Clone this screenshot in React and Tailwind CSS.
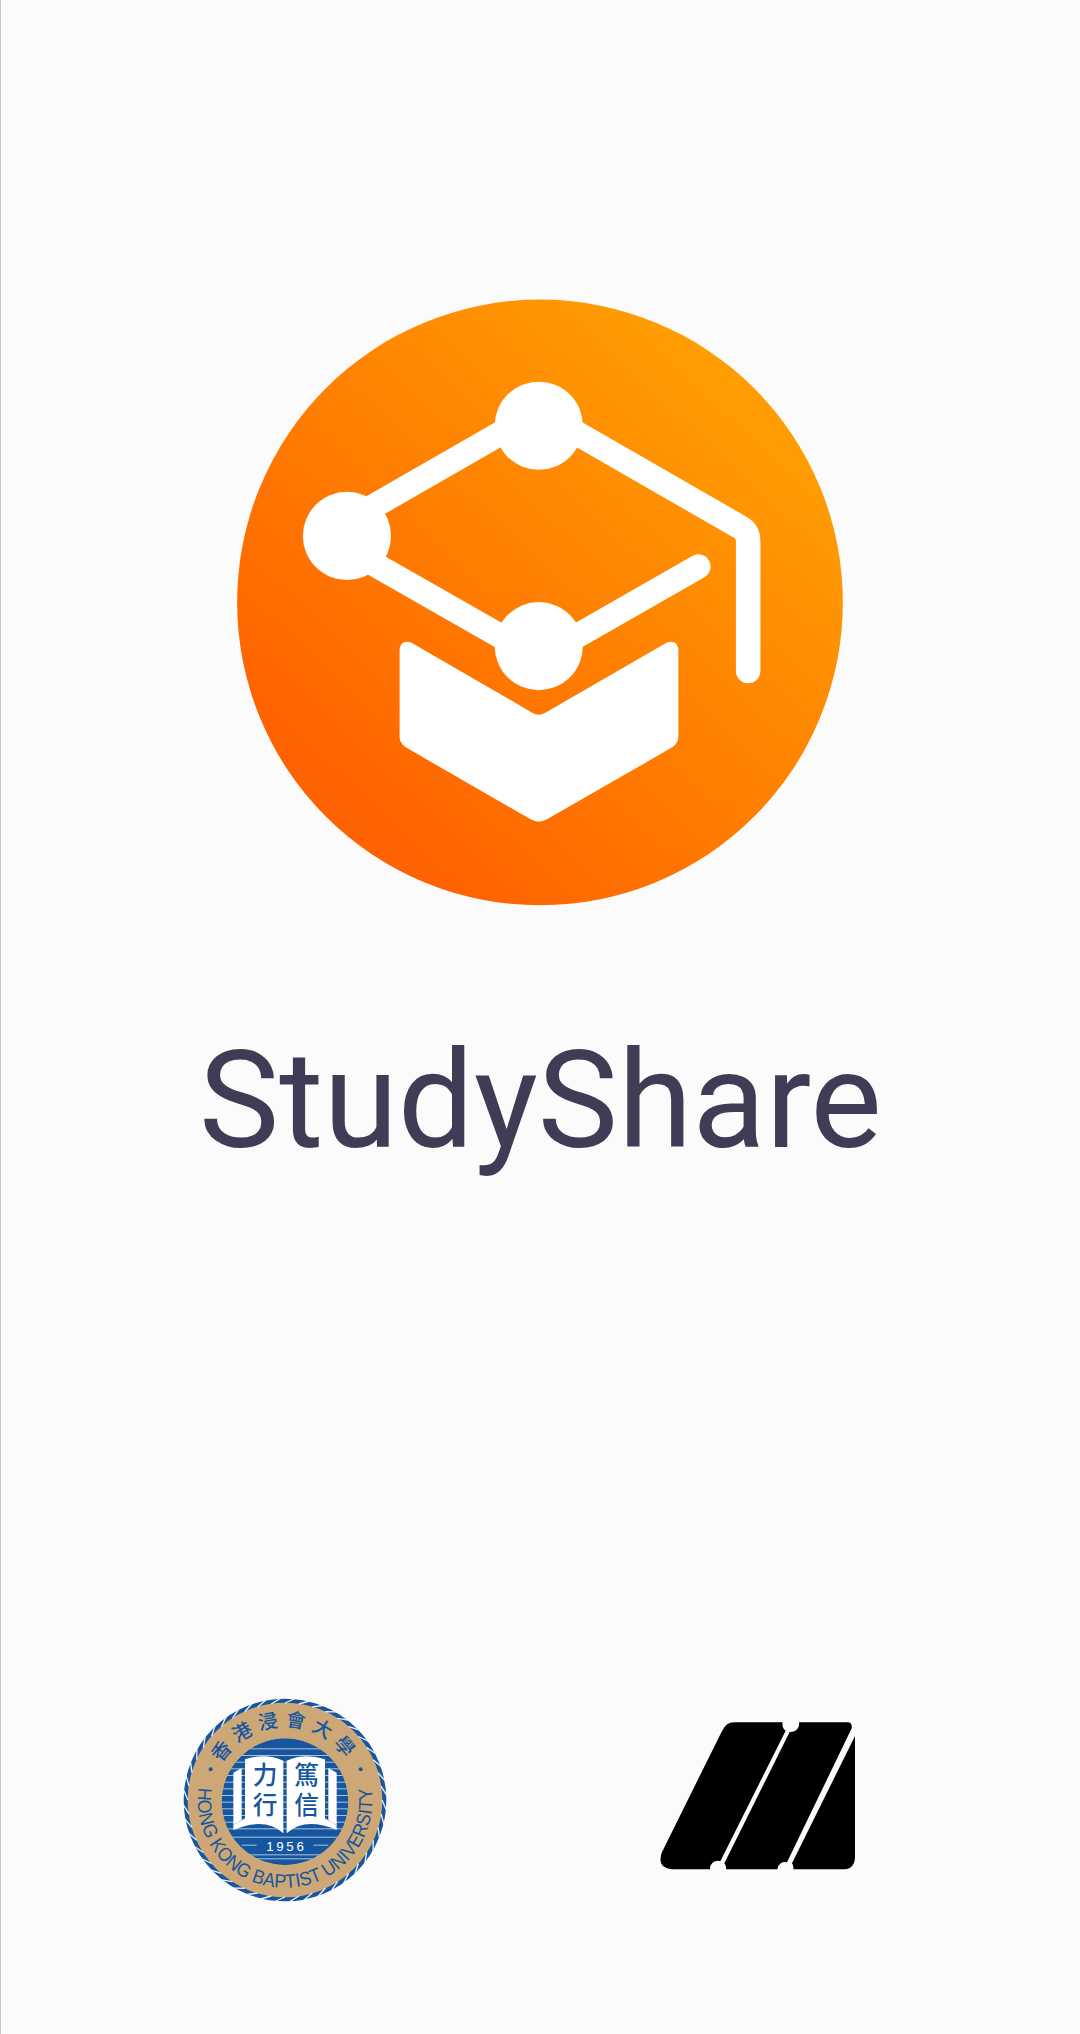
import React from 'react';

// App icon, drawn in a 1568 box that maps onto 640px
const StudyShareLogo = () => (
    <svg viewBox="0 0 1568 1568" className="w-[640px] h-[640px] shrink-0">
        <defs>
            <linearGradient id="orange" x1="0.2" y1="0.85" x2="0.85" y2="0.15">
                <stop offset="0" stopColor="#ff6200" />
                <stop offset="1" stopColor="#ff9e02" />
            </linearGradient>
        </defs>
        <circle cx="784" cy="790" r="742" fill="url(#orange)" />
        <path
            d="M1172 702 L781 926 L253 625 L781 322 L1275 606 Q1294 617 1294 640 L1294 958"
            fill="none"
            stroke="#fff"
            strokeWidth="60"
            strokeLinecap="round"
            strokeLinejoin="round"
        />
        <circle cx="781" cy="357" r="108" fill="#fff" />
        <circle cx="311" cy="627" r="108" fill="#fff" />
        <circle cx="781" cy="897" r="108" fill="#fff" />
        <path
            d="M440 905 Q443 880 468 888 L765 1060 Q781 1070 797 1060 L1095 888 Q1120 880 1123 905 L1123 1118 Q1123 1135 1108 1145 L800 1322 Q781 1332 762 1322 L455 1145 Q440 1135 440 1118 Z"
            fill="#fff"
        />
    </svg>
);

const blue = '#15569f';
const stripes = [205, 225, 245, 265, 285, 305, 325, 345, 365, 385, 405, 425, 445, 470, 523, 535];

// twisted cord round the seal: light slanted cuts across a blue ring
const cordCuts = Array.from({ length: 44 }, (_, i) => {
    const a = (i / 44) * Math.PI * 2;
    const b = a + 0.1;
    return {
        x1: 345 + 291 * Math.cos(a),
        y1: 360 + 291 * Math.sin(a),
        x2: 345 + 306 * Math.cos(b),
        y2: 360 + 306 * Math.sin(b),
    };
});

// University seal
const Seal = () => (
    <svg viewBox="0 0 690 690" className="w-[230px] h-[230px] shrink-0">
        <defs>
            <clipPath id="medallion">
                <circle cx="345" cy="365" r="190" />
            </clipPath>
            <path id="lowerArc" d="M96 280 A262 262 0 1 0 594 280" />
            <path id="upperArc" d="M125 360 A220 220 0 0 1 565 360" />
        </defs>
        <circle cx="345" cy="360" r="296" fill="#cda876" />
        <circle cx="345" cy="360" r="298" fill="none" stroke={blue} strokeWidth="12" />
        {cordCuts.map((t, i) => (
            <line key={i} x1={t.x1} y1={t.y1} x2={t.x2} y2={t.y2} stroke="#eef1f4" strokeWidth="4" />
        ))}
        <text fontFamily="'Noto Sans CJK TC', sans-serif" fontSize="58" fill={blue} fontWeight="500" textAnchor="middle">
            <textPath href="#upperArc" startOffset="50%" letterSpacing="19">香港浸會大學</textPath>
        </text>
        <text fontFamily="'Liberation Sans', sans-serif" fontSize="58" fill={blue} textAnchor="middle">
            <textPath href="#lowerArc" startOffset="50%" textLength="900" lengthAdjust="spacingAndGlyphs">HONG KONG BAPTIST UNIVERSITY</textPath>
        </text>
        <circle cx="122" cy="268" r="6" fill={blue} />
        <circle cx="572" cy="268" r="6" fill={blue} />
        <g clipPath="url(#medallion)">
            <circle cx="345" cy="365" r="190" fill={blue} />
            {stripes.map((y) => (
                <rect key={y} x="150" y={y} width="390" height="3" fill="#a9c3de" />
            ))}
        </g>
        <path d="M190 278 L215 264 L215 420 L190 436 Z" fill="#fff" />
        <path d="M500 278 L475 264 L475 420 L500 436 Z" fill="#fff" />
        <path d="M190 436 L225 415 L225 238 Q285 218 340 242 L340 460 Q285 410 190 450 Z" fill="#fff" />
        <path d="M500 436 L465 415 L465 238 Q405 218 350 242 L350 460 Q405 410 500 450 Z" fill="#fff" />
        <g fontFamily="'Noto Sans CJK TC', sans-serif" fontSize="74" fontWeight="500" fill={blue} textAnchor="middle">
            <text x="285" y="311">力</text>
            <text x="285" y="401">行</text>
            <text x="410" y="311">篤</text>
            <text x="410" y="401">信</text>
        </g>
        <rect x="215" y="494" width="45" height="3" fill="#a9c3de" />
        <rect x="430" y="494" width="45" height="3" fill="#a9c3de" />
        <text x="349" y="512" fontFamily="'Liberation Sans', sans-serif" fontSize="40" fill="#fff" textAnchor="middle" letterSpacing="8">1956</text>
    </svg>
);

// Black slanted mark
const SlantMark = () => (
    <svg viewBox="0 0 690 570" className="w-[230px] h-[190px] shrink-0 mt-[20px]">
        <path d="M282 67 L428 67 A25 25 0 0 0 437 92 L241 484 A23 23 0 0 0 210 508 L95 508 Q50 505 65 458 L245 95 Q258 67 282 67 Z" fill="#000" />
        <path d="M477 67 L625 67 Q637 68 635 85 L441 487 A23 23 0 0 0 412 508 L258 508 A24 24 0 0 0 253 490 L449 96 A25 25 0 0 0 477 67 Z" fill="#000" />
        <path d="M645 108 L645 470 Q645 508 607 508 L460 508 A23 23 0 0 0 456 490 Z" fill="#000" />
    </svg>
);

const App = () => {
    return (
        <div className="w-full h-[2034px] bg-[#fbfbfb] border-l border-[#c8c8c8] flex flex-col overflow-hidden">
            <div className="flex justify-center pt-[280px] pr-[1px]">
                <StudyShareLogo />
            </div>
            <h1 className="mt-[101px] text-center font-['Roboto',sans-serif] text-[135px] leading-[160px] font-normal text-[#403c56]">
                StudyShare
            </h1>
            <div className="mt-[499px] flex pl-[169px] gap-[240px]">
                <Seal />
                <SlantMark />
            </div>
        </div>
    );
};

export default App;
